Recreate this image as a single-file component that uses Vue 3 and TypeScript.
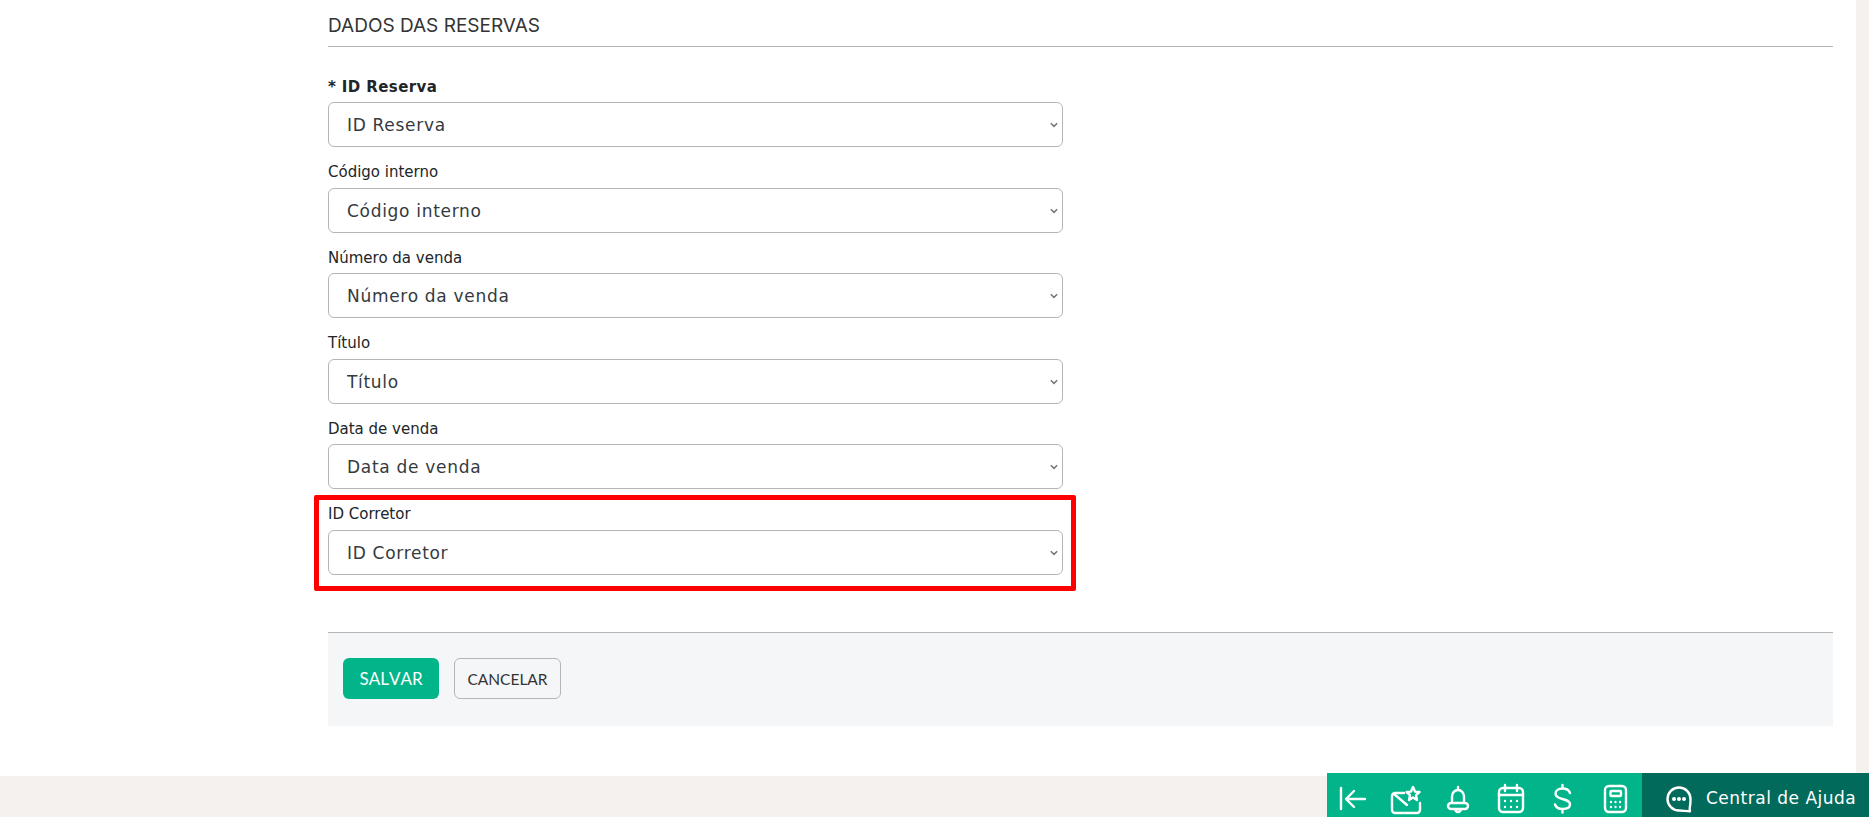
<script setup lang="ts">
const fields: { label: string; required?: boolean; highlighted?: boolean }[] = [
  { label: 'ID Reserva', required: true },
  { label: 'Código interno' },
  { label: 'Número da venda' },
  { label: 'Título' },
  { label: 'Data de venda' },
  { label: 'ID Corretor', highlighted: true },
]
const starPoints = '23,4 25,8.6 29.5,9 26,12.2 27,17 23,14.5 19,17 20,12.2 16.5,9 21,8.6'
const calendarDots = [10, 16, 22].flatMap((x) => [18, 24].map((y) => ({ x, y })))
const calculatorDots = [11, 15.5, 20].flatMap((x) => [19, 24].map((y) => ({ x, y })))
</script>

<template>
  <div class="page">
    <main class="content">
      <h2 class="section-title">DADOS DAS RESERVAS</h2>
      <form class="form" @submit.prevent>
        <div v-for="f in fields" :key="f.label" class="field">
          <label class="label" :class="{ required: f.required }">{{ f.required ? '* ' : '' }}{{ f.label }}</label>
          <div class="select-wrap">
            <select class="select">
              <option>{{ f.label }}</option>
            </select>
            <svg class="chevron" width="8" height="6" viewBox="0 0 8 6" aria-hidden="true">
              <path d="M.8 1.200L4 4.400l3.200-3.200" fill="none" stroke="#777" stroke-width="1.500" />
            </svg>
          </div>
          <div v-if="f.highlighted" class="highlight"></div>
        </div>
      </form>
      <div class="actions">
        <button type="button" class="btn btn-primary">SALVAR</button>
        <button type="button" class="btn btn-secondary">CANCELAR</button>
      </div>
    </main>

    <div class="dock">
      <div class="tools">
        <span class="tool">
          <svg viewBox="0 0 32 32"><path d="M4 5v21M28 16H9M17 8l-8 8 8 8" /></svg>
        </span>
        <span class="tool">
          <svg viewBox="0 0 32 32">
            <path d="M14 10H5a3 3 0 0 0-3 3v14a3 3 0 0 0 3 3h22a3 3 0 0 0 3-3v-7M4 11l13 11" />
            <polygon :points="starPoints" />
          </svg>
        </span>
        <span class="tool">
          <svg viewBox="0 0 32 32">
            <path d="M16 4v3M10 20v-6.500a6 6.500 0 0 1 12 0V20M9 20h14a3 3 0 0 1 0 6H9a3 3 0 0 1 0-6zM13 26a3 3 0 0 0 6 0" />
          </svg>
        </span>
        <span class="tool">
          <svg viewBox="0 0 32 32">
            <rect x="4" y="5" width="24" height="24" rx="4" />
            <path d="M4 12h24M10 2v6M22 2v6" />
            <circle v-for="d in calendarDots" :key="`${d.x}-${d.y}`" class="dot" :cx="d.x" :cy="d.y" r="1.200" />
          </svg>
        </span>
        <span class="tool">
          <svg viewBox="0 0 32 32">
            <path d="M23 10c-1-3-3.500-4.500-7.500-4.500-4 0-7 2-7 5 0 3.500 3 4.500 7 5.500 4 1 7.500 2 7.500 5.500 0 3-3.500 4.500-7.500 4.500s-6.500-1.500-7.500-4.500M15.500 2v3.500M15.500 26v3.500" />
          </svg>
        </span>
        <span class="tool">
          <svg viewBox="0 0 32 32">
            <rect x="5" y="3" width="21" height="26" rx="4" />
            <rect x="10.500" y="8" width="10.500" height="5" rx="1" />
            <circle v-for="d in calculatorDots" :key="`${d.x}-${d.y}`" class="dot" :cx="d.x" :cy="d.y" r="1.200" />
          </svg>
        </span>
      </div>
      <div class="help">
        <svg viewBox="0 0 32 32">
          <path d="M27.500 16a11.500 11.500 0 1 0-11.500 11.500c3.500 0 7.500.8 11 .8-.9-2-.2-4 .2-6.300.2-2 .3-4 .3-6z" />
          <circle class="dot" cx="11" cy="16" r="2" />
          <circle class="dot" cx="16" cy="16" r="2" />
          <circle class="dot" cx="21" cy="16" r="2" />
        </svg>
        <span class="help-text">Central de Ajuda</span>
      </div>
    </div>
  </div>
</template>

<style scoped>
.page {
  height: 817px;
  overflow: hidden;
  background: #f5f1ee;
  font-family: "DejaVu Sans", Verdana, sans-serif;
  color: #212529;
}
.content {
  box-sizing: border-box;
  width: 1856px;
  height: 776px;
  padding: 15px 23px 0 328px;
  background: #fff;
}
.section-title {
  margin: 0;
  padding-bottom: 9px;
  border-bottom: 1px solid #b5b5b5;
  font: 400 19px/22px Inter, sans-serif;
  color: #333;
}
.form {
  width: 735px;
  padding-top: 29.4px;
}
.field {
  position: relative;
  margin-bottom: 15px;
}
.label {
  display: block;
  margin-bottom: 4px;
  font-size: 15px;
  line-height: 21.6px;
  color: #212529;
}
.label.required {
  padding-top: 1px;
  margin-bottom: 3px;
  font-weight: 700;
  letter-spacing: 0.4px;
}
.select-wrap {
  position: relative;
}
.select {
  display: block;
  box-sizing: border-box;
  width: 100%;
  height: 45px;
  padding: 1px 30px 0 18px;
  border: 1px solid #b5b5b5;
  border-radius: 6px;
  background: #fff;
  font-family: inherit;
  font-size: 17px;
  letter-spacing: 0.7px;
  color: #343a40;
  appearance: none;
}
.chevron {
  position: absolute;
  top: 20px;
  right: 5px;
  pointer-events: none;
}
.highlight {
  position: absolute;
  top: -9.4px;
  right: -13px;
  bottom: -16px;
  left: -14px;
  border: 5px solid #ff0000;
  border-radius: 2px;
  pointer-events: none;
}
.actions {
  display: flex;
  gap: 15px;
  box-sizing: border-box;
  height: 94px;
  margin-top: 57px;
  padding: 25px 15px 0;
  border-top: 1px solid #b5b5b5;
  background: #f5f6f8;
}
.btn {
  box-sizing: border-box;
  height: 41px;
  padding-top: 2px;
  border-radius: 6px;
  font-family: Lato, sans-serif;
  font-kerning: none;
}
.btn-primary {
  width: 96px;
  border: 0;
  background: #01b489;
  font-size: 17px;
  color: #fff;
}
.btn-secondary {
  width: 107px;
  border: 1px solid #b5b5b5;
  background: transparent;
  font-size: 15.5px;
  color: #333;
}
.dock {
  position: fixed;
  right: 0;
  bottom: 0;
  display: flex;
  height: 44px;
}
.dock svg {
  width: 32px;
  height: 32px;
  fill: none;
  stroke: #fff;
  stroke-width: 2.4;
  stroke-linecap: round;
  stroke-linejoin: round;
}
.dock svg .dot {
  fill: #fff;
  stroke: none;
}
.tools {
  display: flex;
  background: #01b489;
}
.tool {
  display: flex;
  justify-content: center;
  box-sizing: border-box;
  width: 52.5px;
  padding-top: 10px;
}
.help {
  display: flex;
  box-sizing: border-box;
  width: 227px;
  padding: 10px 0 0 20.5px;
  background: #026a5a;
}
.help-text {
  margin-left: 11.5px;
  font-size: 17px;
  letter-spacing: 0.5px;
  line-height: 30px;
  color: #fff;
}
</style>
